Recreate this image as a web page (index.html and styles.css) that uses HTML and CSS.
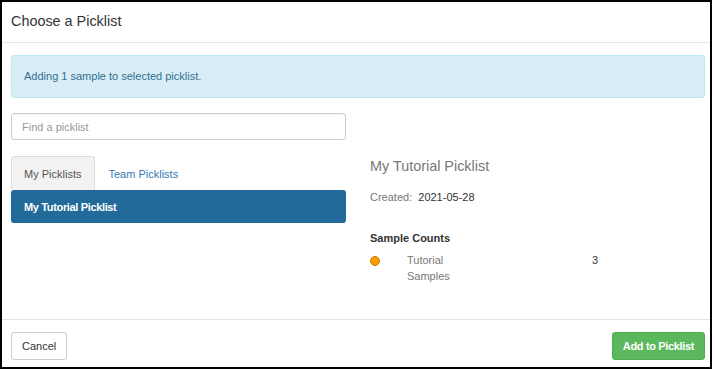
FILE: index.html
```html
<!DOCTYPE html>
<html lang="en">
<head>
  <meta charset="UTF-8" />
  <title>Choose a Picklist</title>
  <link rel="stylesheet" href="styles.css">
</head>
<body>
  <div class="modal">
    <div class="modal-header">
      <h4 class="modal-title">Choose a Picklist</h4>
    </div>

    <div class="modal-body">
      <div class="alert">Adding 1 sample to selected picklist.</div>

      <div class="picker">
        <div class="picker-left">
          <input class="search" type="text" placeholder="Find a picklist" />
          <div class="tabs">
            <div class="tab active">My Picklists</div>
            <div class="tab">Team Picklists</div>
          </div>
          <div class="list">
            <div class="list-item selected">My Tutorial Picklist</div>
          </div>
        </div>

        <div class="picker-right">
          <div class="detail-title">My Tutorial Picklist</div>
          <div class="detail-created">
            <span class="label">Created:</span>
            <span class="value">2021-05-28</span>
          </div>
          <div class="counts-title">Sample Counts</div>
          <div class="counts-row">
            <span class="dot"></span>
            <span class="count-name">Tutorial Samples</span>
            <span class="count-value">3</span>
          </div>
        </div>
      </div>
    </div>

    <div class="modal-footer">
      <button class="btn btn-default">Cancel</button>
      <button class="btn btn-success">Add to Picklist</button>
    </div>
  </div>
</body>
</html>
```

FILE: styles.css
```css
html, body {
  margin: 0;
  padding: 0;
  background: #fff;
}

body {
  font-family: "Liberation Sans", Arial, sans-serif;
  font-size: 11px;
  line-height: 16px;
  color: #333;
}

.modal {
  width: 712px;
  height: 369px;
  box-sizing: border-box;
  border: 2px solid #000;
  display: flex;
  flex-direction: column;
}

/* header */
.modal-header {
  padding: 9px 9px 11px;
  border-bottom: 1px solid #e5e5e5;
}

.modal-title {
  margin: 0;
  font-size: 14.4px;
  line-height: 20px;
  font-weight: normal;
  color: #333;
}

/* body */
.modal-body {
  padding: 12px 5px 0 9px;
}

.alert {
  background: #d9edf7;
  border: 1px solid #bce8f1;
  border-radius: 3px;
  color: #31708f;
  padding: 13px 12px;
  line-height: 15px;
}

.picker {
  display: flex;
  gap: 24px;
  margin-top: 15px;
}

.picker-left {
  width: 335px;
}

.search {
  display: block;
  width: 335px;
  height: 27px;
  box-sizing: border-box;
  border: 1px solid #ccc;
  border-radius: 3px;
  padding: 0 10px;
  font-family: inherit;
  font-size: 11px;
  color: #555;
  box-shadow: inset 0 1px 1px rgba(0, 0, 0, 0.05);
}

.search::placeholder {
  color: #999;
}

.tabs {
  display: flex;
  margin-top: 16px;
}

.tab {
  height: 34px;
  box-sizing: border-box;
  padding: 0 13px 0 12px;
  display: flex;
  align-items: center;
  color: #337ab7;
  border: 1px solid transparent;
  border-bottom: none;
  border-radius: 3px 3px 0 0;
}

.tab.active {
  background: #f2f2f2;
  border-color: #ddd;
  color: #555;
}

.list-item {
  height: 33px;
  box-sizing: border-box;
  padding: 0 13px;
  display: flex;
  align-items: center;
  border-radius: 3px;
  font-weight: bold;
  letter-spacing: -0.35px;
}

.list-item.selected {
  background: #226a9a;
  color: #fff;
}

.picker-right {
  flex: 1;
  padding-top: 43px;
}

.detail-title {
  font-size: 14.4px;
  line-height: 20px;
  color: #777;
}

.detail-created {
  margin-top: 13px;
}

.detail-created .label {
  color: #777;
  margin-right: 3px;
}

.counts-title {
  margin-top: 25px;
  font-weight: bold;
}

.counts-row {
  display: grid;
  grid-template-columns: 37px 185px auto;
  margin-top: 6px;
}

.dot {
  width: 10px;
  height: 10px;
  box-sizing: border-box;
  margin-top: 4px;
  border-radius: 50%;
  background: #f90;
  border: 1px solid #c97a00;
}

.count-name {
  width: 60px;
  color: #777;
}

/* footer */
.modal-footer {
  margin-top: auto;
  border-top: 1px solid #e5e5e5;
  padding: 12px 5px 7px 9px;
  display: flex;
  justify-content: space-between;
}

.btn {
  height: 28px;
  box-sizing: border-box;
  border: 1px solid #ccc;
  border-radius: 3px;
  padding: 0 10px;
  font-family: inherit;
  font-size: 11px;
  background: #fff;
  color: #333;
}

.btn-success {
  background: #5cb85c;
  border-color: #4cae4c;
  color: #fff;
  font-weight: bold;
  letter-spacing: -0.35px;
  padding: 0 10px;
}
```
